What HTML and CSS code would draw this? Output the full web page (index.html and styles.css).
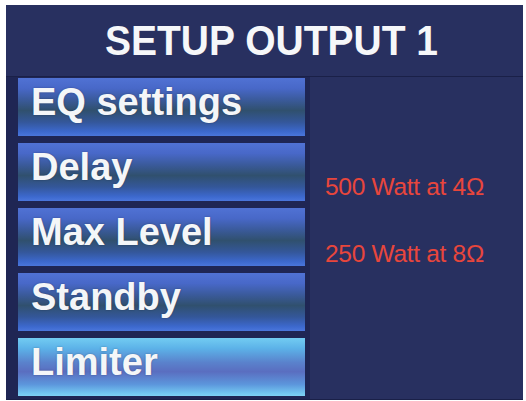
FILE: index.html
```html
<!DOCTYPE html>
<html lang="en">
<head>
    <meta charset="UTF-8">
    <meta name="viewport" content="width=device-width, initial-scale=1.0">
    <title>Setup Output 1</title>
    <link rel="stylesheet" href="styles.css">
</head>
<body>

    <div class="screen">
        <div class="title-bar">
            <h1 class="title">SETUP OUTPUT 1</h1>
        </div>

        <div class="content">
            <div class="menu">
                <div class="menu-item">EQ settings</div>
                <div class="menu-item">Delay</div>
                <div class="menu-item">Max Level</div>
                <div class="menu-item">Standby</div>
                <div class="menu-item active">Limiter</div>
            </div>

            <div class="info">
                <p class="power">500 Watt at 4&Omega;</p>
                <p class="power">250 Watt at 8&Omega;</p>
            </div>
        </div>
    </div>

</body>
</html>
```

FILE: styles.css
```css
body {
    margin: 0;
    padding: 0;
    background: #fff;
    font-family: "Liberation Sans", Arial, sans-serif;
}

.screen {
    width: 517px;
    height: 394px;
    margin: 5px 0 0 6px;
    background: #283060;
    display: flex;
    flex-direction: column;
    border-bottom: 1px solid #1a2048;
}

.title-bar {
    height: 71px;
    border-bottom: 1px solid #1a2048;
    display: flex;
    align-items: center;
    justify-content: center;
    padding-left: 14px;
}

.title {
    margin: 0;
    color: #f6f7f9;
    font-size: 39px;
    font-weight: bold;
    transform: scaleY(1.1);
}

.content {
    flex: 1;
    display: flex;
}

.menu {
    width: 287px;
    padding: 1px 5px 0 12px;
    background: #1f2654;
    display: flex;
    flex-direction: column;
    gap: 7px;
}

.menu-item {
    height: 58px;
    box-sizing: border-box;
    padding: 2px 0 0 13px;
    color: #f4f6f8;
    font-size: 38px;
    font-weight: bold;
    line-height: 44px;
    text-shadow: 0 0 2px rgba(0, 0, 0, 0.3);
    background: linear-gradient(to bottom, #5072d4 0%, #4868c8 18%, #3a5a9a 38%, #30506e 56%, #34579a 76%, #3c68cc 92%, #4a76dc 100%);
}

.menu-item.active {
    background: linear-gradient(to bottom, #72ccf2 0%, #5cb2e8 18%, #5a82cc 42%, #5a6ec0 58%, #5c96dc 80%, #72c6f0 95%, #7ed2f4 100%);
}

.info {
    padding: 96px 0 0 15px;
}

.power {
    margin: 0 0 39px;
    color: #e8463c;
    font-size: 24.5px;
    letter-spacing: -0.3px;
}
```
